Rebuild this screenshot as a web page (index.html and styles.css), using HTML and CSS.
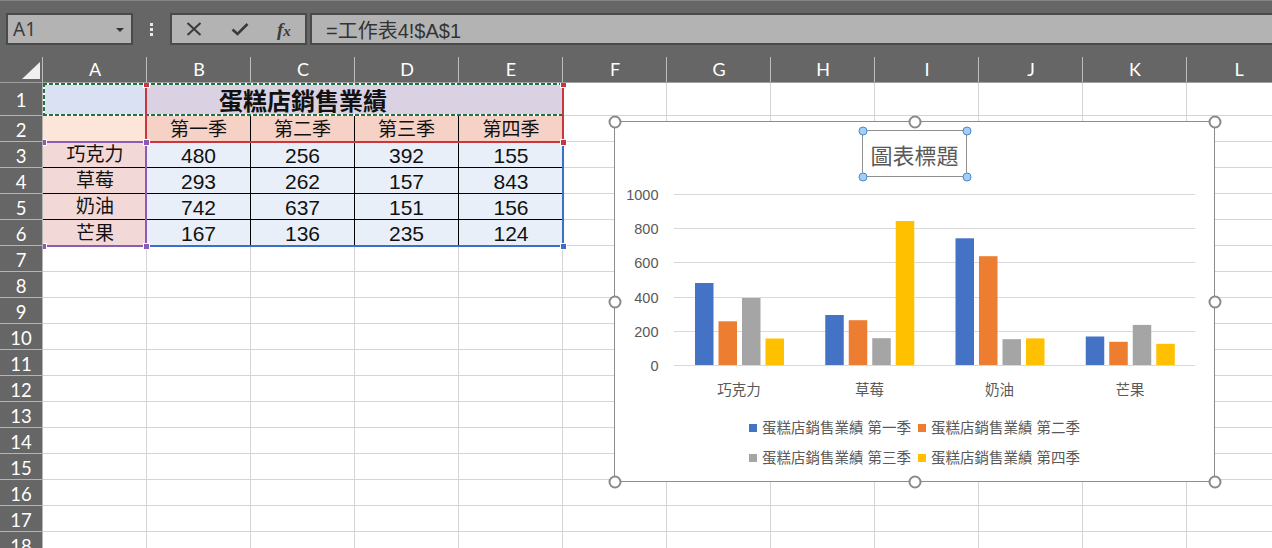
FILE: index.html
```html
<!DOCTYPE html>
<html lang="zh-Hant">
<head>
<meta charset="utf-8">
<title>蛋糕店銷售業績</title>
<link rel="stylesheet" href="styles.css">
</head>
<body>
<div class="app">
  <div class="formula-row">
    <div class="namebox"><span class="nb-text">A1</span><span class="nb-arrow"></span></div>
    <div class="grip"><i></i><i></i><i></i></div>
    <div class="fx-buttons">
      <svg class="ico" width="16" height="14" viewBox="0 0 16 14"><path d="M1.5 1 L14.5 13 M14.5 1 L1.5 13" stroke="#3a3a3a" stroke-width="2" fill="none"/></svg>
      <svg class="ico" width="18" height="14" viewBox="0 0 18 14"><path d="M1.5 7.5 L6.5 12 L16.5 2" stroke="#3a3a3a" stroke-width="2.6" fill="none"/></svg>
      <span class="fx">f<span class="fx-x">x</span></span>
    </div>
    <div class="formula-input">=工作表4!$A$1</div>
  </div>

  <div class="col-headers">
    <div class="corner"><svg width="43" height="29" viewBox="0 0 43 29"><polygon points="40,9 40,26 22,26" fill="#f0f0f0"/></svg></div>
    <div class="colh">A</div><div class="colh">B</div><div class="colh">C</div><div class="colh">D</div>
    <div class="colh">E</div><div class="colh">F</div><div class="colh">G</div><div class="colh">H</div>
    <div class="colh">I</div><div class="colh">J</div><div class="colh">K</div><div class="colh">L</div>
  </div>

  <div class="sheet">
    <div class="row-headers">
      <div class="rowh first">1</div><div class="rowh">2</div><div class="rowh">3</div><div class="rowh">4</div>
      <div class="rowh">5</div><div class="rowh">6</div><div class="rowh">7</div><div class="rowh">8</div>
      <div class="rowh">9</div><div class="rowh">10</div><div class="rowh">11</div><div class="rowh">12</div>
      <div class="rowh">13</div><div class="rowh">14</div><div class="rowh">15</div><div class="rowh">16</div>
      <div class="rowh">17</div><div class="rowh">18</div>
    </div>

    <div class="cells">
      <div class="table">
        <div class="c title">蛋糕店銷售業績</div>

        <div class="c a2"></div>
        <div class="c q vr">第一季</div><div class="c q vr">第二季</div><div class="c q vr">第三季</div><div class="c q">第四季</div>

        <div class="c cat hb">巧克力</div>
        <div class="c num vr hb">480</div><div class="c num vr hb">256</div><div class="c num vr hb">392</div><div class="c num hb">155</div>

        <div class="c cat hb">草莓</div>
        <div class="c num vr hb">293</div><div class="c num vr hb">262</div><div class="c num vr hb">157</div><div class="c num hb">843</div>

        <div class="c cat hb">奶油</div>
        <div class="c num vr hb">742</div><div class="c num vr hb">637</div><div class="c num vr hb">151</div><div class="c num hb">156</div>

        <div class="c cat">芒果</div>
        <div class="c num vr">167</div><div class="c num vr">136</div><div class="c num vr">235</div><div class="c num">124</div>
      </div>

      <div class="rng marquee"></div>
      <div class="rng rng-blue"></div>
      <div class="rng rng-red"></div>
      <div class="rng rng-purple"></div>

      <span class="hd red h-red-tl"></span>
      <span class="hd red h-red-tr"></span>
      <span class="hd red h-red-br"></span>
      <span class="hd blue h-blue-br"></span>
      <span class="hd purple h-pur-tl"></span>
      <span class="hd purple h-pur-tr"></span>
      <span class="hd purple h-pur-bl"></span>
      <span class="hd purple h-pur-br"></span>

      <div class="chart">
        <div class="chart-title">圖表標題
          <span class="th th-tl"></span><span class="th th-tr"></span>
          <span class="th th-bl"></span><span class="th th-br"></span>
        </div>

        <svg class="plot" width="599" height="230" viewBox="0 0 599 230">
          <g stroke="#d9d9d9" stroke-width="1">
            <line x1="59" x2="580" y1="17.5" y2="17.5"/>
            <line x1="59" x2="580" y1="51.5" y2="51.5"/>
            <line x1="59" x2="580" y1="85.5" y2="85.5"/>
            <line x1="59" x2="580" y1="120.5" y2="120.5"/>
            <line x1="59" x2="580" y1="154.5" y2="154.5"/>
            <line x1="59" x2="580" y1="188.5" y2="188.5"/>
          </g>
          <g fill="#4472c4">
            <rect x="80" y="106" width="18.5" height="82"/>
            <rect x="210.25" y="138" width="18.5" height="50"/>
            <rect x="340.5" y="61.3" width="18.5" height="126.7"/>
            <rect x="470.75" y="159.5" width="18.5" height="28.5"/>
          </g>
          <g fill="#ed7d31">
            <rect x="103.5" y="144.3" width="18.5" height="43.7"/>
            <rect x="233.75" y="143.2" width="18.5" height="44.8"/>
            <rect x="364" y="79.2" width="18.5" height="108.8"/>
            <rect x="494.25" y="164.8" width="18.5" height="23.2"/>
          </g>
          <g fill="#a5a5a5">
            <rect x="127" y="121" width="18.5" height="67"/>
            <rect x="257.25" y="161.2" width="18.5" height="26.8"/>
            <rect x="387.5" y="162.2" width="18.5" height="25.8"/>
            <rect x="517.75" y="147.9" width="18.5" height="40.1"/>
          </g>
          <g fill="#ffc000">
            <rect x="150.5" y="161.5" width="18.5" height="26.5"/>
            <rect x="280.75" y="44" width="18.5" height="144"/>
            <rect x="411" y="161.4" width="18.5" height="26.6"/>
            <rect x="541.25" y="166.8" width="18.5" height="21.2"/>
          </g>
          <g class="axis-y" text-anchor="end">
            <text x="43.5" y="22.5">1000</text>
            <text x="43.5" y="56.5">800</text>
            <text x="43.5" y="90.5">600</text>
            <text x="43.5" y="125.5">400</text>
            <text x="43.5" y="159.5">200</text>
            <text x="43.5" y="193.5">0</text>
          </g>
          <g class="axis-x" text-anchor="middle">
            <text x="124.1" y="218">巧克力</text>
            <text x="254.4" y="218">草莓</text>
            <text x="384.6" y="218">奶油</text>
            <text x="514.9" y="218">芒果</text>
          </g>
        </svg>

        <div class="legend">
          <div class="legend-row">
            <div class="legend-item"><span class="sw sw-blue"></span>蛋糕店銷售業績 第一季</div>
            <div class="legend-item"><span class="sw sw-orange"></span>蛋糕店銷售業績 第二季</div>
          </div>
          <div class="legend-row">
            <div class="legend-item"><span class="sw sw-gray"></span>蛋糕店銷售業績 第三季</div>
            <div class="legend-item"><span class="sw sw-yellow"></span>蛋糕店銷售業績 第四季</div>
          </div>
        </div>

        <span class="ch ch-tl"></span><span class="ch ch-tm"></span><span class="ch ch-tr"></span>
        <span class="ch ch-ml"></span><span class="ch ch-mr"></span>
        <span class="ch ch-bl"></span><span class="ch ch-bm"></span><span class="ch ch-br"></span>
      </div>
    </div>
  </div>
</div>
</body>
</html>
```

FILE: styles.css
```css
* { box-sizing: border-box; }

html, body {
  margin: 0;
  padding: 0;
}

body {
  width: 1272px;
  height: 548px;
  overflow: hidden;
  background: #666666;
  font-family: "Liberation Sans", "Noto Sans CJK TC", sans-serif;
}

.app {
  display: flex;
  flex-direction: column;
  height: 548px;
}

/* ---------- formula bar ---------- */
.formula-row {
  flex: none;
  height: 53px;
  border-top: 1px solid #858585;
  padding-top: 12px;
  display: flex;
  align-items: flex-start;
}

.namebox {
  margin-left: 6px;
  width: 127px;
  height: 32px;
  background: #b3b3b3;
  border: 2px solid #4a4a4a;
  display: flex;
  align-items: center;
  justify-content: space-between;
  padding: 0 7px 0 5px;
}

.nb-text {
  font-family: "Noto Sans", "Liberation Sans", sans-serif;
  font-size: 19px;
  color: #3c3c3c;
  line-height: 1;
}

.nb-arrow {
  width: 0;
  height: 0;
  border-left: 4px solid transparent;
  border-right: 4px solid transparent;
  border-top: 4px solid #333333;
  margin-top: 2px;
}

.grip {
  width: 37px;
  height: 32px;
  display: flex;
  flex-direction: column;
  align-items: center;
  justify-content: center;
  gap: 2px;
}

.grip i {
  display: block;
  width: 3px;
  height: 3px;
  background: #e8e8e8;
}

.fx-buttons {
  width: 137px;
  height: 32px;
  background: #b3b3b3;
  border: 2px solid #4a4a4a;
  display: flex;
  align-items: center;
  justify-content: space-around;
}

.ico { display: block; }

.fx {
  font-family: "Liberation Serif", serif;
  font-style: italic;
  font-weight: 700;
  font-size: 19px;
  color: #3a3a3a;
  line-height: 1;
}

.fx-x {
  font-size: 15px;
}

.formula-input {
  flex: 1;
  margin-left: 3px;
  height: 32px;
  background: #b3b3b3;
  border: 2px solid #4a4a4a;
  border-right: none;
  display: flex;
  align-items: center;
  padding-left: 14px;
  font-family: "Liberation Sans", "Noto Sans CJK TC", sans-serif;
  font-size: 20px;
  color: #333333;
}

/* ---------- column headers ---------- */
.col-headers {
  flex: none;
  height: 30px;
  display: flex;
  border-bottom: 1px solid #a0a0a0;
  overflow: hidden;
}

.corner {
  width: 43px;
  flex: none;
  background: linear-gradient(#bdbdbd, #bdbdbd) right 0 top 4px / 1px 25px no-repeat;
}

.corner svg { display: block; }

.colh {
  width: 104px;
  flex: none;
  display: flex;
  align-items: center;
  justify-content: center;
  padding-top: 3px;
  color: #ffffff;
  font-family: Lato, "Liberation Sans", sans-serif;
  font-size: 18px;
  background: linear-gradient(#bdbdbd, #bdbdbd) right 0 top 4px / 1px 25px no-repeat;
}

/* ---------- sheet ---------- */
.sheet {
  flex: 1;
  min-height: 0;
  display: flex;
}

.row-headers {
  width: 43px;
  flex: none;
  border-right: 1px solid #b5b5b5;
  overflow: hidden;
}

.rowh {
  height: 26px;
  border-bottom: 1px solid #b5b5b5;
  display: flex;
  align-items: center;
  justify-content: center;
  padding-top: 2px;
  color: #ffffff;
  font-family: Lato, "Liberation Sans", sans-serif;
  font-size: 18.5px;
}

.rowh.first { height: 33px; }

.cells {
  flex: 1;
  position: relative;
  overflow: hidden;
  background-color: #ffffff;
  background-image:
    repeating-linear-gradient(to right, transparent 0 103px, #d4d4d4 103px 104px),
    linear-gradient(#d4d4d4, #d4d4d4),
    repeating-linear-gradient(to bottom, transparent 0 25px, #d4d4d4 25px 26px);
  background-position: 0 0, 0 32px, 0 33px;
  background-size: 100% 100%, 100% 1px, 100% 100%;
  background-repeat: no-repeat;
}

/* ---------- data table ---------- */
.table {
  display: grid;
  grid-template-columns: repeat(5, 104px);
  grid-template-rows: 33px repeat(5, 26px);
  width: 520px;
}

.c {
  display: flex;
  align-items: center;
  justify-content: center;
  font-family: "Liberation Sans", "Noto Sans CJK TC", sans-serif;
  font-size: 19px;
  line-height: 1;
  color: #111111;
}

.title {
  grid-column: 1 / 6;
  background: linear-gradient(to right, #dae1f3 0 103px, #dad2e2 103px);
  font-family: "Noto Sans CJK TC", sans-serif;
  font-weight: 700;
  font-size: 24px;
}

.a2 { background: #fde5d9; }
.q { background: #f6d1c5; }
.cat { background: #f2d8d6; }
.num { background: #e9eff8; font-size: 21px; padding-top: 1px; }

.vr { border-right: 1px solid #000000; }
.hb { border-bottom: 1px solid #000000; }

/* ---------- range highlights ---------- */
.rng { position: absolute; }

.marquee {
  left: 0;
  top: 0;
  width: 521px;
  height: 33px;
  background:
    repeating-linear-gradient(90deg, #217346 0 4px, #ffffff 4px 6px) left top / 100% 2px no-repeat,
    repeating-linear-gradient(90deg, #217346 0 4px, #ffffff 4px 6px) left bottom / 100% 2px no-repeat,
    repeating-linear-gradient(180deg, #217346 0 4px, #ffffff 4px 6px) left top / 2px 100% no-repeat,
    repeating-linear-gradient(180deg, #217346 0 4px, #ffffff 4px 6px) right top / 2px 100% no-repeat;
}

.rng-red {
  left: 102px;
  top: 0;
  width: 419px;
  height: 60px;
  border: 2px solid #c9363e;
  border-top: none;
}

.rng-blue {
  left: 102px;
  top: 58px;
  width: 419px;
  height: 106px;
  border: 2px solid #3b6fc8;
}

.rng-purple {
  left: 0;
  top: 58px;
  width: 104px;
  height: 106px;
  border: 2px solid #8a5cb8;
  border-left: none;
}

.hd {
  position: absolute;
  width: 7px;
  height: 7px;
  margin: -3.5px 0 0 -3.5px;
  border: 1px solid #ffffff;
}

.hd.red { background: #c9363e; }
.hd.blue { background: #3b6fc8; }
.hd.purple { background: #8a5cb8; }

.h-red-tl { left: 103px; top: 1px; }
.h-red-tr { left: 520px; top: 1px; }
.h-red-br { left: 520px; top: 59px; }
.h-blue-br { left: 520px; top: 163px; }
.h-pur-tl { left: 0; top: 59px; }
.h-pur-tr { left: 103px; top: 59px; }
.h-pur-bl { left: 0; top: 163px; }
.h-pur-br { left: 103px; top: 163px; }

/* ---------- chart ---------- */
.chart {
  position: absolute;
  left: 571px;
  top: 38px;
  width: 601px;
  height: 361px;
  border: 1px solid #8c8c8c;
  background: #ffffff;
  display: flex;
  flex-direction: column;
  align-items: center;
}

.chart-title {
  position: relative;
  margin-top: 8px;
  width: 105px;
  height: 47px;
  border: 1px solid #8f8f8f;
  display: flex;
  align-items: center;
  justify-content: center;
  font-family: "Noto Sans CJK TC", sans-serif;
  font-size: 22px;
  line-height: 1;
  color: #595959;
}

.th {
  position: absolute;
  width: 9px;
  height: 9px;
  border-radius: 50%;
  background: #a9cdf1;
  border: 1px solid #3f8ed8;
  transform: translate(-50%, -50%);
}

.th-tl { left: -0.5px; top: -0.5px; }
.th-tr { left: calc(100% + 0.5px); top: -0.5px; }
.th-bl { left: -0.5px; top: calc(100% + 0.5px); }
.th-br { left: calc(100% + 0.5px); top: calc(100% + 0.5px); }

.plot {
  display: block;
  align-self: stretch;
  flex: none;
}

.plot text {
  font-family: "Liberation Sans", "Noto Sans CJK TC", sans-serif;
  font-size: 14.5px;
  fill: #595959;
}

.legend {
  margin-top: 6px;
  display: flex;
  flex-direction: column;
  align-items: center;
}

.legend-row {
  height: 30px;
  display: flex;
  align-items: center;
  gap: 7px;
}

.legend-item {
  display: flex;
  align-items: center;
  gap: 5px;
  font-family: "Liberation Sans", "Noto Sans CJK TC", sans-serif;
  font-size: 14.5px;
  line-height: 1;
  color: #595959;
  white-space: nowrap;
}

.sw {
  display: block;
  width: 8px;
  height: 8px;
}

.sw-blue { background: #4472c4; }
.sw-orange { background: #ed7d31; }
.sw-gray { background: #a5a5a5; }
.sw-yellow { background: #ffc000; }

.ch {
  position: absolute;
  width: 13px;
  height: 13px;
  border-radius: 50%;
  border: 2.5px solid #8a8a8a;
  background: #ffffff;
  transform: translate(-50%, -50%);
}

.ch-tl { left: -0.5px; top: -0.5px; }
.ch-tm { left: 50%; top: -0.5px; }
.ch-tr { left: calc(100% + 0.5px); top: -0.5px; }
.ch-ml { left: -0.5px; top: 50%; }
.ch-mr { left: calc(100% + 0.5px); top: 50%; }
.ch-bl { left: -0.5px; top: calc(100% + 0.5px); }
.ch-bm { left: 50%; top: calc(100% + 0.5px); }
.ch-br { left: calc(100% + 0.5px); top: calc(100% + 0.5px); }
```
